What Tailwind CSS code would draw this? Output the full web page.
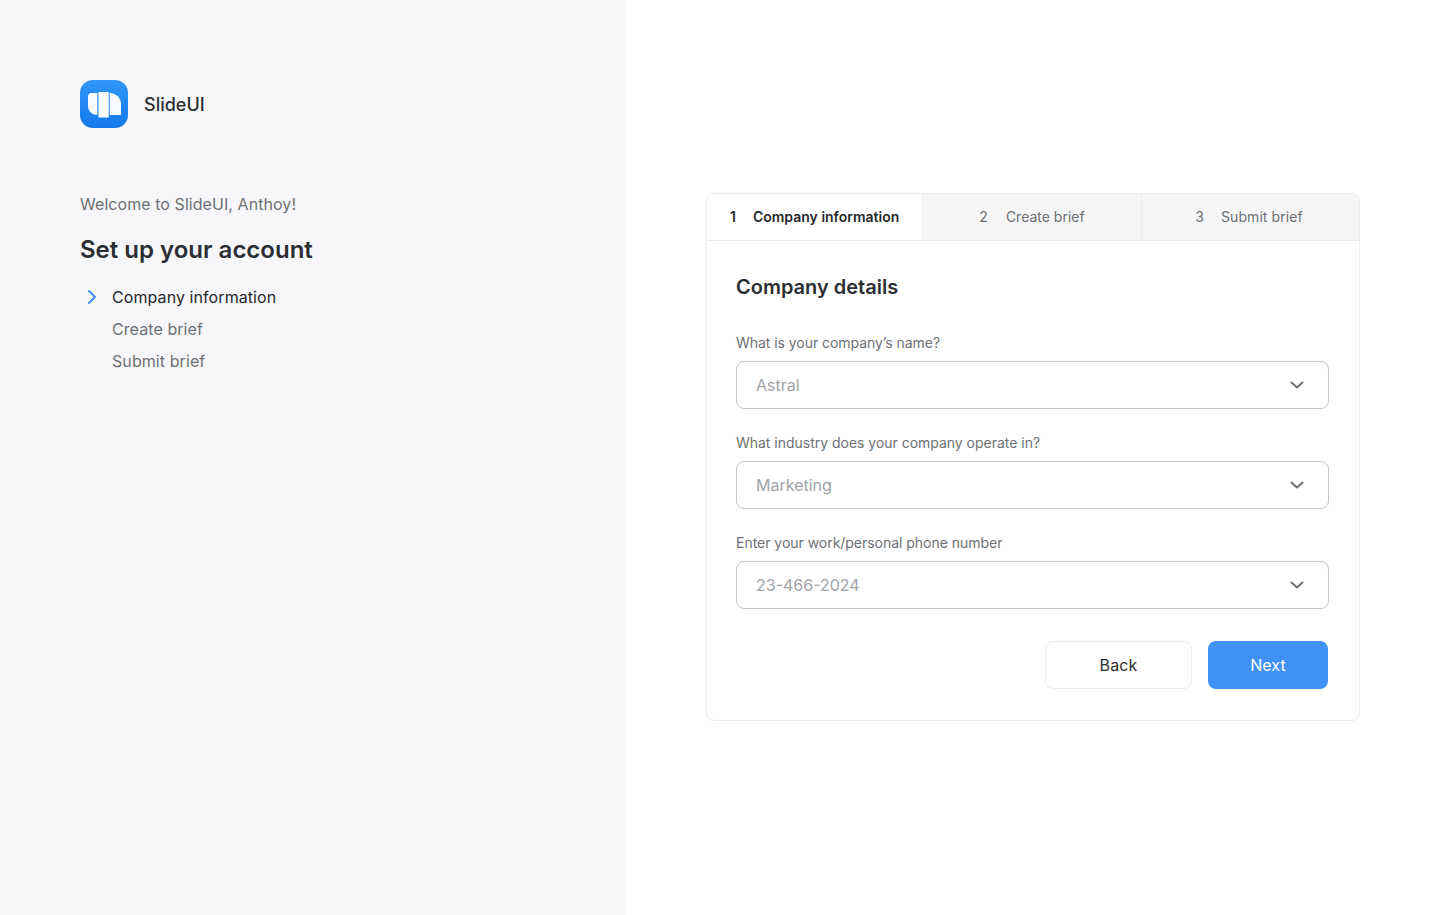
<!DOCTYPE html>
<html lang="en">
<head>
    <meta charset="UTF-8">
    <meta name="viewport" content="width=device-width, initial-scale=1.0">
    <title>SlideUI - Set up your account</title>
    <script src="https://cdn.jsdelivr.net/npm/@tailwindcss/browser@4"></script>
</head>
<body class="font-['Inter',sans-serif] bg-white">
<div class="flex h-[915px] w-[1440px] overflow-hidden">

    <!-- left panel -->
    <aside class="w-[626px] shrink-0 bg-[#f7f7f9] pl-20 pt-20">
        <div class="flex items-center gap-4">
            <div class="w-12 h-12 rounded-[13px] bg-gradient-to-b from-[#2e96f8] to-[#1479ee] flex items-center justify-center">
                <svg width="34" height="28" viewBox="0 0 34 28" fill="#fff">
                    <path d="M1 6.500C1 4.500 2.500 3 4.500 3h5.800v22C5 25 1 21 1 16z" opacity=".96"/>
                    <path d="M11.500 2h10.200v25.500H11.500z"/>
                    <path d="M22.700 3c6.300 0 11.300 5 11.300 11v10c0 .7-.3 1-1 1H22.700z" opacity=".96"/>
                </svg>
            </div>
            <span class="text-lg leading-6 font-medium text-[#2b2e33] pt-[2px]">SlideUI</span>
        </div>

        <p class="mt-[64px] text-base leading-6 text-[#6d7175] tracking-[0.06px]">Welcome to SlideUI, Anthoy!</p>
        <h1 class="mt-[18px] text-2xl leading-8 font-semibold text-[#2b2e33]">Set up your account</h1>

        <ul class="mt-[15px] text-base leading-6 text-[#6d7175] tracking-[0.08px]">
            <li class="relative pl-8 h-8 flex items-center text-[#26282c]">
                <svg class="absolute left-[6px] top-[8px]" width="12" height="16" viewBox="0 0 12 16" fill="none" stroke="#3f8ff0" stroke-width="2" stroke-linecap="round" stroke-linejoin="round"><path d="M3 2l6 6-6 6"/></svg>
                Company information
            </li>
            <li class="pl-8 h-8 flex items-center">Create brief</li>
            <li class="pl-8 h-8 flex items-center">Submit brief</li>
        </ul>
    </aside>

    <!-- right panel -->
    <main class="flex-1 pl-20 pr-20 pt-[193px]">
        <div class="w-[654px] rounded-lg border border-[#ededef] overflow-hidden">
            <div class="flex h-[47px] border-b border-[#ededef] text-sm leading-5">
                <div class="w-[216px] flex items-center pl-[23px] gap-[17px] font-semibold text-[#26282c] border-r border-[#ededef]">
                    <span>1</span><span>Company information</span>
                </div>
                <div class="w-[219px] flex items-center justify-center gap-[18px] text-[#6d7175] bg-[#f6f6f7] border-r border-[#ededef]">
                    <span>2</span><span>Create brief</span>
                </div>
                <div class="flex-1 flex items-center justify-center gap-[17px] text-[#6d7175] bg-[#f6f6f7] pr-[3px] tracking-[0.08px]">
                    <span>3</span><span>Submit brief</span>
                </div>
            </div>

            <div class="pl-[29px] pr-[30px] pt-[30px] pb-[31px]">
                <h2 class="text-xl leading-8 font-semibold text-[#2b2e33]">Company details</h2>

                <label class="block mt-[30px] text-sm leading-5 text-[#6d7175] tracking-[-0.05px]">What is your company’s name?</label>
                <div class="mt-2 h-12 rounded-lg border border-[#c4c6c9] flex items-center justify-between pl-[19px] pr-[23px] text-base text-[#a0a3a7]">
                    <span>Astral</span>
                    <svg width="16" height="16" viewBox="0 0 16 16" fill="none" stroke="#6d7175" stroke-width="2" stroke-linecap="round" stroke-linejoin="round"><path d="M2.500 5.500L8 10.500l5.500-5"/></svg>
                </div>

                <label class="block mt-6 text-sm leading-5 text-[#6d7175] tracking-[-0.02px]">What industry does your company operate in?</label>
                <div class="mt-2 h-12 rounded-lg border border-[#c4c6c9] flex items-center justify-between pl-[19px] pr-[23px] text-base text-[#a0a3a7]">
                    <span>Marketing</span>
                    <svg width="16" height="16" viewBox="0 0 16 16" fill="none" stroke="#6d7175" stroke-width="2" stroke-linecap="round" stroke-linejoin="round"><path d="M2.500 5.500L8 10.500l5.500-5"/></svg>
                </div>

                <label class="block mt-6 text-sm leading-5 text-[#6d7175] tracking-[-0.03px]">Enter your work/personal phone number</label>
                <div class="mt-2 h-12 rounded-lg border border-[#c4c6c9] flex items-center justify-between pl-[19px] pr-[23px] text-base text-[#a0a3a7]">
                    <span>23-466-2024</span>
                    <svg width="16" height="16" viewBox="0 0 16 16" fill="none" stroke="#6d7175" stroke-width="2" stroke-linecap="round" stroke-linejoin="round"><path d="M2.500 5.500L8 10.500l5.500-5"/></svg>
                </div>

                <div class="mt-8 flex justify-end gap-4 pr-px text-base tracking-[0.1px]">
                    <button class="w-[147px] h-12 rounded-lg border border-[#ededef] bg-white font-normal text-[#2b2e33]">Back</button>
                    <button class="w-[120px] h-12 rounded-lg bg-[#3f91f5] font-normal text-white">Next</button>
                </div>
            </div>
        </div>
    </main>
</div>
</body>
</html>
